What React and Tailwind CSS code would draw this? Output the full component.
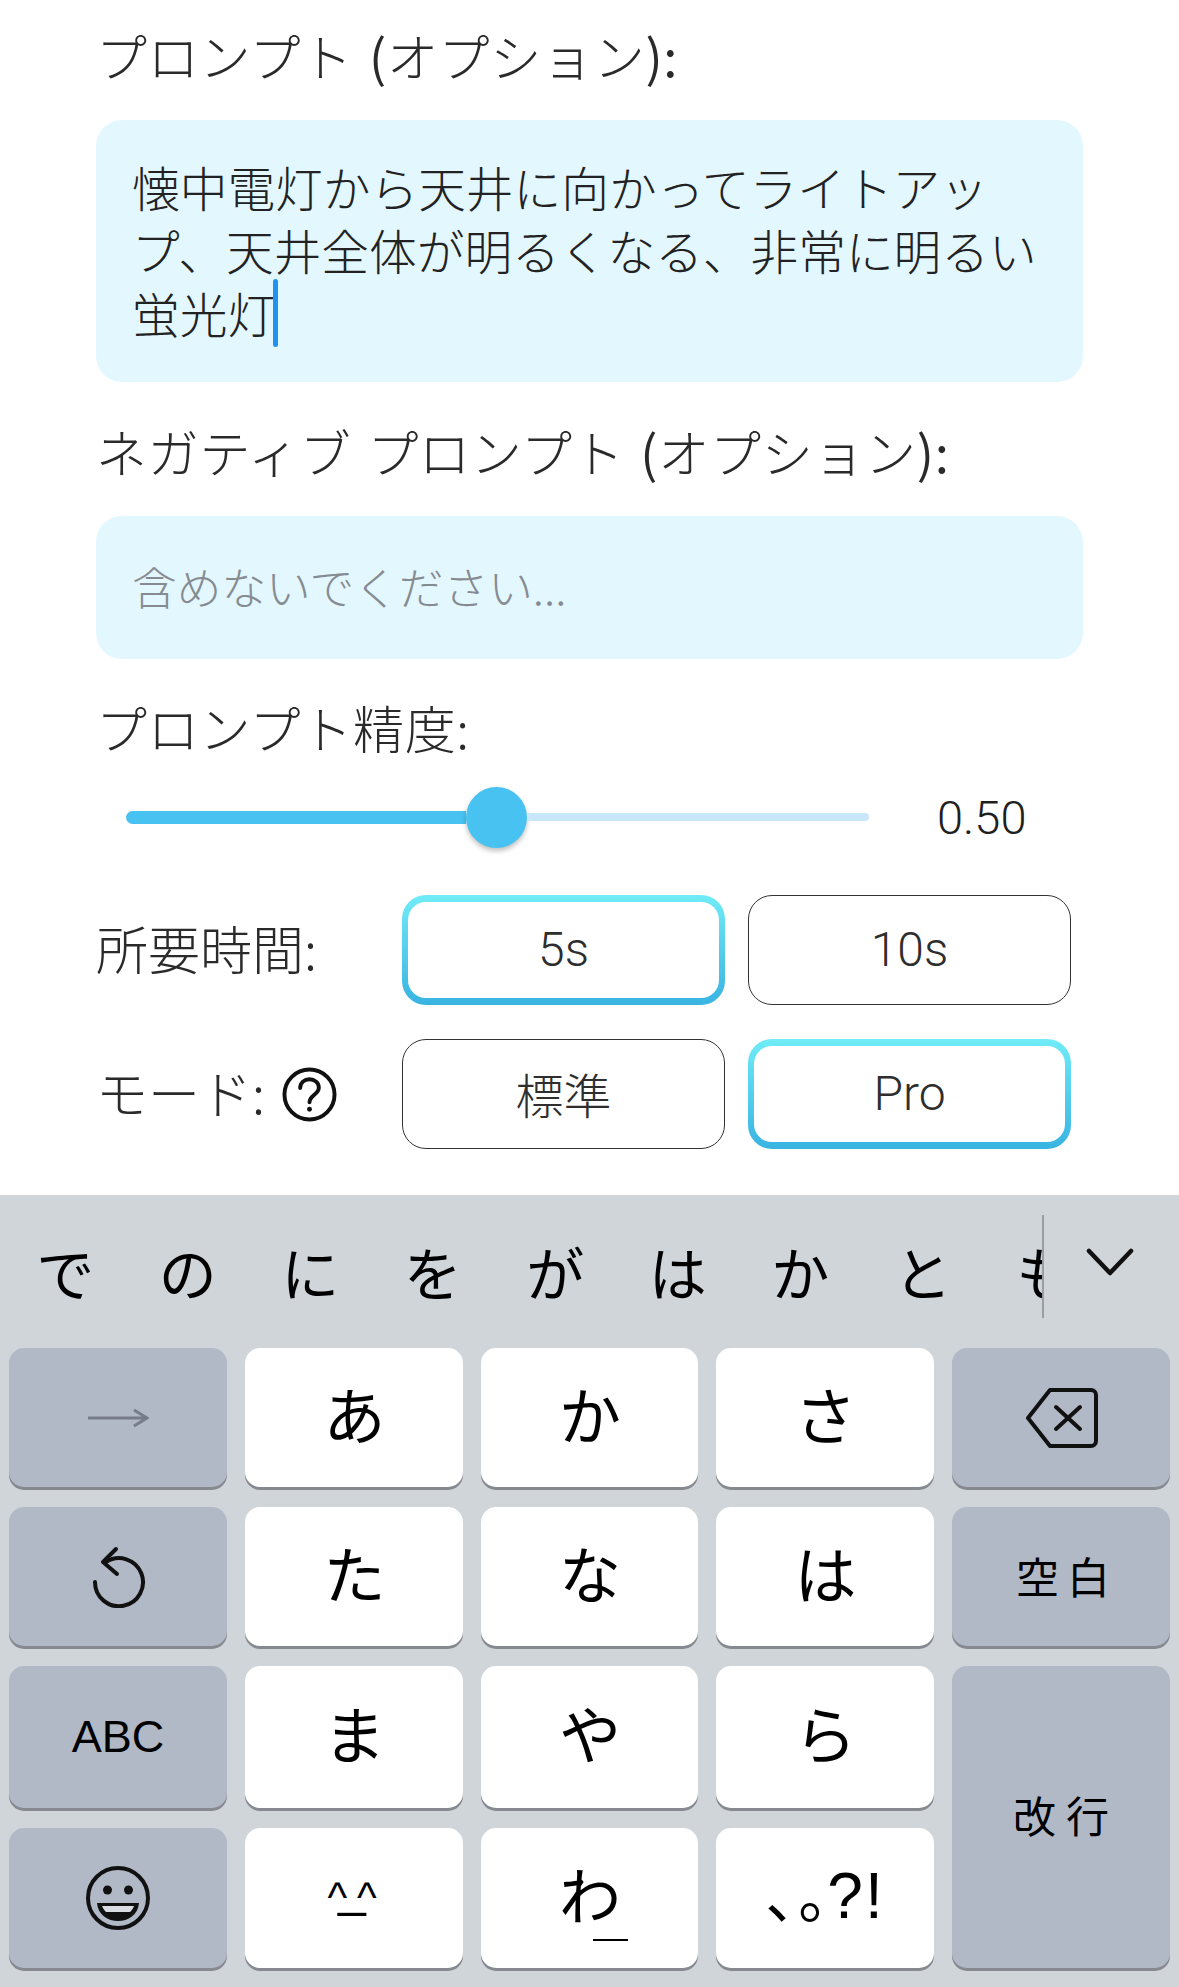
import React from "react";

const JP = "font-['Noto_Sans_CJK_JP',sans-serif]";
const suggestions = ["で", "の", "に", "を", "が", "は", "か", "と", "も"];

const Label = ({ children }) => (
  <div className={`h-[60px] flex items-center text-[51px] leading-[60px] tracking-[0.7px] font-light text-[#2a2a2a] [word-spacing:4px] whitespace-pre ${JP}`}>{children}</div>
);

const Paren = ({ children }) => <span className="font-normal">{children}</span>;

const Choice = ({ active, children }) => (
  active ? (
    <div className="w-[323px] h-[110px] rounded-[24px] px-[6px] py-[7px] bg-gradient-to-b from-[#70ebf7] to-[#39b3e1]">
      <div className={`w-full h-full rounded-[18px] bg-white flex items-center justify-center text-[48px] font-light text-[#2e2e2e] ${JP}`}>{children}</div>
    </div>
  ) : (
    <div className={`w-[323px] h-[110px] rounded-[24px] border-[1.5px] border-[#333] bg-white flex items-center justify-center text-[48px] font-light text-[#2e2e2e] ${JP}`}>{children}</div>
  )
);

const Key = ({ dark, className = "", children }) => (
  <div className={`rounded-[15px] flex items-center justify-center text-black shadow-[0_3px_0_#868a90] ${dark ? "bg-[#b2b9c6]" : "bg-white"} ${className}`}>{children}</div>
);

const Kana = ({ children }) => <span className={`text-[62px] leading-none pb-[10px] pl-[1px] ${JP}`}>{children}</span>;

const Help = () => (
  <svg width="55" height="55" viewBox="0 0 56 56" fill="none" stroke="#111" strokeWidth="4" className="ml-[17px]">
    <circle cx="28" cy="28" r="25.5" />
    <path d="M18.5 21.5c0-5.5 4.2-9 9.5-9s9.5 3.500 9.500 8.500c0 7-9.500 7.500-9.500 15" strokeLinecap="round" />
    <circle cx="28" cy="43" r="2.500" fill="#111" stroke="none" />
  </svg>
);

export default function App() {
  return (
    <div className="w-[1179px] h-[1987px] bg-white flex flex-col overflow-hidden">
      <div className="px-[96px] pt-[25px]">
        <Label>プロンプト <Paren>(</Paren>オプション<Paren>):</Paren></Label>
        <div className={`mt-[35px] h-[262px] rounded-[26px] bg-[#e3f7ff] pl-[36px] pt-[35px] text-[47.7px] leading-[63px] font-light text-[#222] ${JP}`}>
          懐中電灯から天井に向かってライトアッ<br />
          プ、天井全体が明るくなる、非常に明るい<br />
          蛍光灯<span className="inline-block w-[5px] h-[68px] -my-[6px] -ml-[2px] -translate-y-[7px] rounded-full bg-[#1f93ee] align-middle" />
        </div>

        <div className="mt-[39px]"><Label>ネガティブ プロンプト <Paren>(</Paren>オプション<Paren>):</Paren></Label></div>
        <div className={`mt-[35px] h-[143px] rounded-[26px] bg-[#e3f7ff] pl-[36px] pb-[4px] flex items-center text-[44.7px] font-light text-[#868b91] ${JP}`}>
          含めないでください...
        </div>

        <div className="mt-[38px]"><Label>プロンプト精度:</Label></div>

        <div className="mt-[30px] h-[60px] pl-[30px] flex items-center">
          <div className="w-[743px] flex items-center">
            <div className="w-[340px] h-[13px] rounded-l-full bg-[#48c3f1]" />
            <div className="w-[61px] h-[61px] rounded-full bg-[#48c3f1] shadow-[0_3px_5px_rgba(0,0,0,0.25)] shrink-0" />
            <div className="flex-1 h-[8px] rounded-r-full bg-[#c9e6fa]" />
          </div>
          <div className="ml-[68px] text-[47px] leading-none font-light text-[#1f1f1f] font-['Roboto',sans-serif]">0.50</div>
        </div>

        <div className="mt-[48px] flex items-center">
          <div className={`w-[306px] pb-[5px] text-[52px] font-light text-[#2a2a2a] ${JP}`}>所要時間:</div>
          <Choice active><span className="font-['Roboto',sans-serif]">5s</span></Choice>
          <div className="w-[23px]" />
          <Choice><span className="font-['Roboto',sans-serif]">10s</span></Choice>
        </div>

        <div className="mt-[34px] flex items-center">
          <div className={`w-[306px] flex items-center text-[52px] font-light text-[#2a2a2a] ${JP}`}><span className="pb-[5px]">モード:</span><Help /></div>
          <Choice><span className="pb-[3px]">標準</span></Choice>
          <div className="w-[23px]" />
          <Choice active><span className="font-['Roboto',sans-serif]">Pro</span></Choice>
        </div>
      </div>

      <div className="mt-[46px] flex-1 bg-[#d0d5da] flex flex-col">
        <div className="h-[153px] flex items-center shrink-0">
          <div className="w-[1042px] h-full pl-[4px] flex items-center overflow-hidden">
            {suggestions.map((s) => (
              <span key={s} className={`w-[122.5px] shrink-0 text-center text-[58px] leading-none text-black ${JP} pb-[2px]`}>{s}</span>
            ))}
          </div>
          <div className="w-[2px] h-[103px] mt-[-10px] bg-[#9a9ea4]" />
          <div className="flex-1 flex justify-center pb-[20px] pr-[4px]">
            <svg width="48" height="28" viewBox="0 0 48 28" fill="none" stroke="#111" strokeWidth="4.500" strokeLinecap="round" strokeLinejoin="round">
              <path d="M3 3l21 22L45 3" />
            </svg>
          </div>
        </div>

        <div className="pl-[9px] grid grid-cols-[218px_218px_217px_218px_218px] grid-rows-[139px_139px_142px_140px] gap-x-[18px] gap-y-[20px]">
          <Key dark>
            <svg width="62" height="20" viewBox="0 0 62 20" fill="none" stroke="#767d88" strokeWidth="3">
              <path d="M1 10h58M47 2l13 8-13 8" />
            </svg>
          </Key>
          <Key><Kana>あ</Kana></Key>
          <Key><Kana>か</Kana></Key>
          <Key><Kana>さ</Kana></Key>
          <Key dark>
            <svg width="72" height="60" viewBox="0 0 72 60" fill="none" stroke="#111" strokeWidth="4" strokeLinejoin="round" strokeLinecap="round" className="ml-[2px]">
              <path d="M24 2H65a5 5 0 0 1 5 5V53a5 5 0 0 1-5 5H24L2 30Z" />
              <path d="M30 19l24 22M54 19L30 41" />
            </svg>
          </Key>

          <Key dark>
            <svg width="60" height="62" viewBox="0 0 60 62" fill="none" stroke="#111" strokeWidth="4" strokeLinecap="round" strokeLinejoin="round">
              <path d="M18 16A24 24 0 1 1 7 36" />
              <path d="M28 3L15 16l14 12" />
            </svg>
          </Key>
          <Key><Kana>た</Kana></Key>
          <Key><Kana>な</Kana></Key>
          <Key><Kana>は</Kana></Key>
          <Key dark><span className={`text-[43px] leading-none tracking-[8px] pl-[12px] pb-[3px] ${JP}`}>空白</span></Key>

          <Key dark><span className="text-[45px] leading-none pb-[2px] font-['Liberation_Sans',sans-serif]">ABC</span></Key>
          <Key><Kana>ま</Kana></Key>
          <Key><Kana>や</Kana></Key>
          <Key><Kana>ら</Kana></Key>
          <Key dark className="row-span-2"><span className={`text-[43px] leading-none tracking-[10px] pl-[10px] pb-[6px] ${JP}`}>改行</span></Key>

          <Key dark>
            <svg width="68" height="66" viewBox="0 0 68 66" fill="none" stroke="#111" strokeWidth="4">
              <circle cx="34" cy="33" r="30" />
              <circle cx="23.500" cy="25" r="4.500" fill="#111" stroke="none" />
              <circle cx="44.500" cy="25" r="4.500" fill="#111" stroke="none" />
              <path d="M13 38h42c-1 12-11 18-21 18s-20-6-21-18Z" fill="#111" stroke="none" />
              <path d="M18 41h32c-1 3-3 5-4 6H22c-1-1-3-3-4-6Z" fill="#d9dce1" stroke="none" />
            </svg>
          </Key>
          <Key>
            <span className="flex items-start pr-[4px] font-['Liberation_Sans',sans-serif] text-black">
              <span className="text-[42px] leading-none">^</span>
              <span className="text-[50px] leading-none -mx-[9px] mt-[-13px]">_</span>
              <span className="text-[42px] leading-none">^</span>
            </span>
          </Key>
          <Key className="relative">
            <Kana>わ</Kana>
            <span className="absolute left-[112px] top-[111px] w-[35px] h-[2px] bg-black" />
          </Key>
          <Key>
            <span className={`flex items-baseline pb-[6px] text-black ${JP}`}>
              <span className="w-[33px] text-[60px] leading-none whitespace-nowrap">、</span>
              <span className="w-[29px] text-[60px] leading-none whitespace-nowrap">。</span>
              <span className="text-[64px] leading-none tracking-[2px] font-['Liberation_Sans',sans-serif]">?!</span>
            </span>
          </Key>
        </div>
      </div>
    </div>
  );
}
